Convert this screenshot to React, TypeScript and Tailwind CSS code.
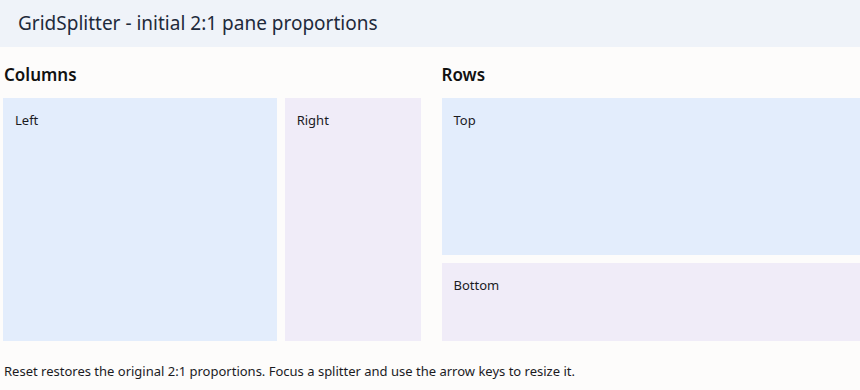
const font = { fontFamily: '"Segoe UI", "Noto Sans", sans-serif' };

function Pane({ label, tone }: { label: string; tone: 'blue' | 'violet' }) {
  const bg = tone === 'blue' ? 'bg-[#e3edfc]' : 'bg-[#f0ecf8]';
  return (
    <div className={`${bg} min-w-0 min-h-0 px-3 pt-[13px] text-[13px] leading-[18px] text-[#1b1b1f]`}>
      {label}
    </div>
  );
}

function Splitter({ vertical }: { vertical?: boolean }) {
  return (
    <div
      tabIndex={0}
      role="separator"
      aria-orientation={vertical ? 'vertical' : 'horizontal'}
      className={vertical ? 'cursor-col-resize outline-none' : 'cursor-row-resize outline-none'}
    />
  );
}

export default function App() {
  return (
    <div className="min-h-screen bg-[#fdfcfb]" style={font}>
      <header className="h-[47px] bg-[#eff3f9] flex items-center px-[18px]">
        <h1 className="text-[19px] text-[#1e2a3b]">GridSplitter - initial 2:1 pane proportions</h1>
      </header>

      <div className="grid grid-cols-2 gap-5 pl-[3px] pt-[16px]">
        <section>
          <h2 className="text-[17px] font-semibold leading-[24px] text-[#111] pl-px mb-[11px]">Columns</h2>
          <div className="grid grid-cols-[2fr_8px_1fr] h-[243px]">
            <Pane label="Left" tone="blue" />
            <Splitter vertical />
            <Pane label="Right" tone="violet" />
          </div>
        </section>
        <section>
          <h2 className="text-[17px] font-semibold leading-[24px] text-[#111] mb-[11px]">Rows</h2>
          <div className="grid grid-rows-[2fr_8px_1fr] h-[243px]">
            <Pane label="Top" tone="blue" />
            <Splitter />
            <Pane label="Bottom" tone="violet" />
          </div>
        </section>
      </div>

      <p className="px-1 pt-[21px] text-[13px] text-[#1b1b1f]">
        Reset restores the original 2:1 proportions. Focus a splitter and use the arrow keys to resize it.
      </p>
    </div>
  );
}
